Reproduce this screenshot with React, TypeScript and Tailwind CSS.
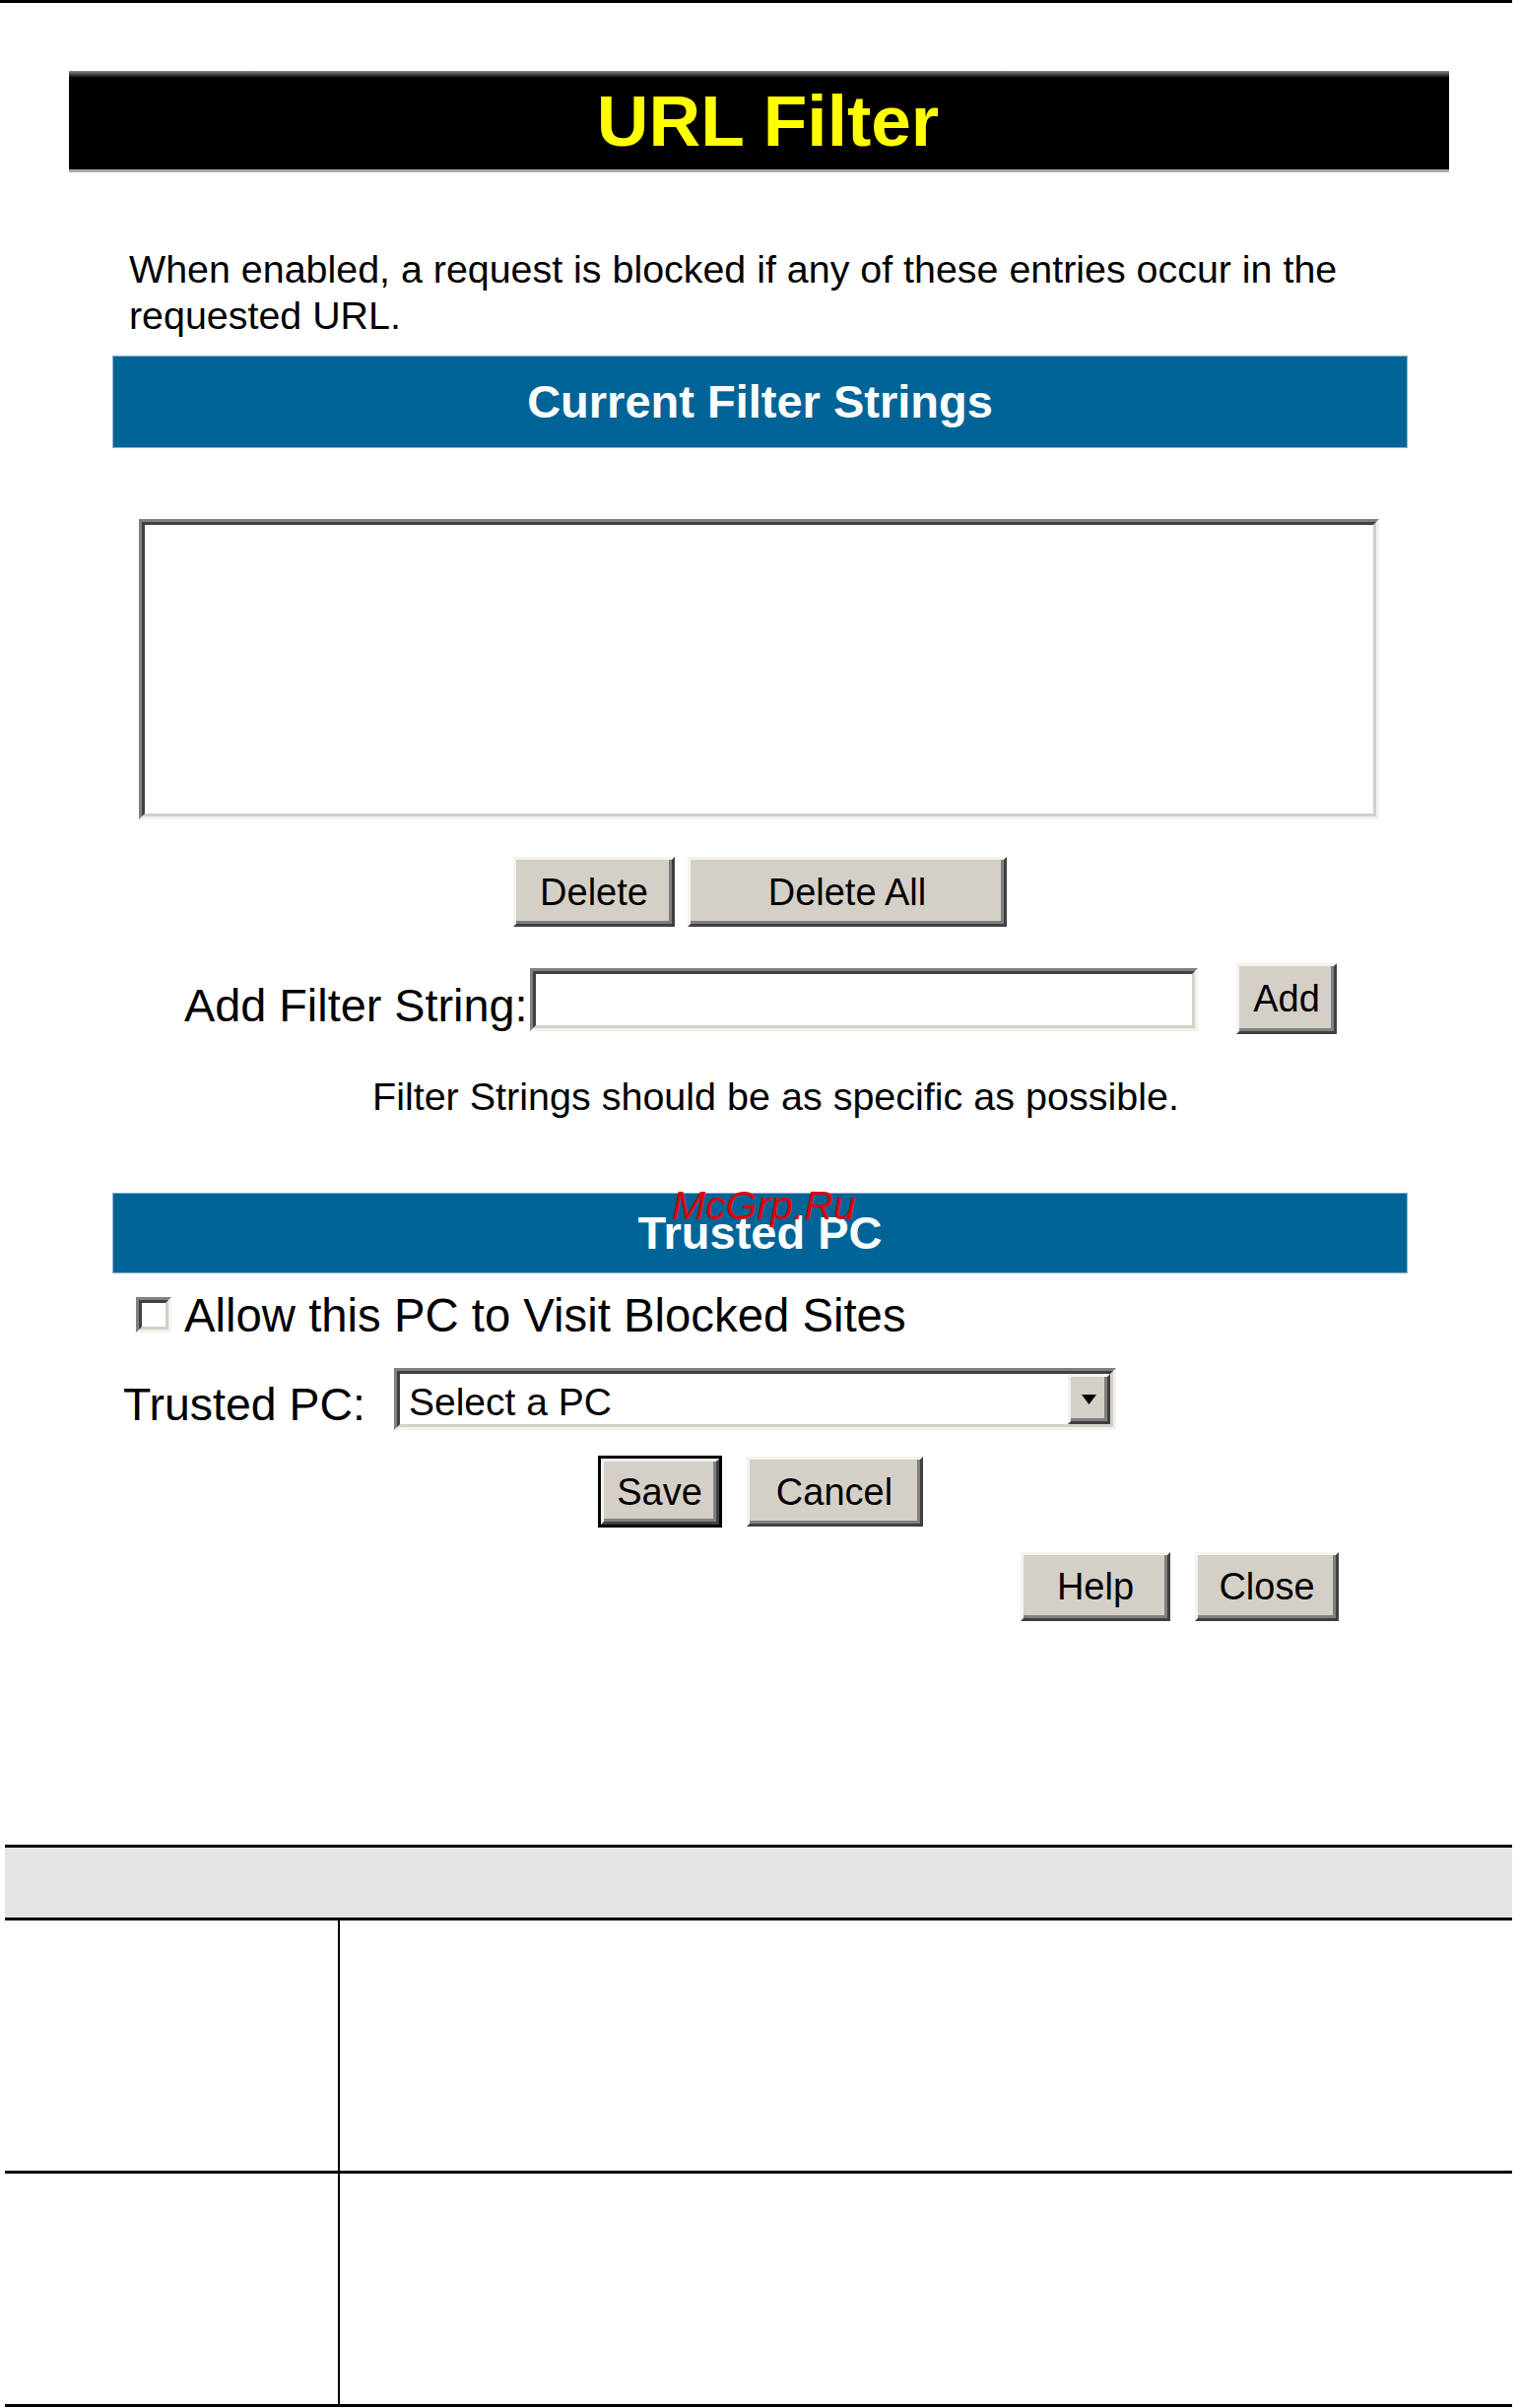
import type { ReactNode } from "react";

function Sunken({ className, children }: { className: string; children?: ReactNode }) {
    return (
        <div
            className={`border-[3px] border-t-[#808080] border-l-[#808080] border-b-[#f2f1ed] border-r-[#f2f1ed] ${className}`}
        >
            <div className="h-full w-full border-[3px] border-t-[#404040] border-l-[#404040] border-b-[#d4d0c8] border-r-[#d4d0c8] bg-white">
                {children}
            </div>
        </div>
    );
}

function Btn({ label, className }: { label: string; className: string }) {
    return (
        <button
            type="button"
            className={`flex items-center justify-center bg-[#d4d0c8] border-[3px] border-t-[#f4f3f0] border-l-[#f4f3f0] border-r-[#404040] border-b-[#404040] shadow-[inset_-3px_-3px_0_#808080] text-[38px] leading-none text-black ${className}`}
        >
            {label}
        </button>
    );
}

export default function App() {
    return (
        <div className="flex min-h-[2445px] w-[1543px] flex-col bg-white font-['Liberation_Sans',Arial,sans-serif] text-black">
            {/* page rule */}
            <div className="h-[3px] w-[1535px] bg-black" />

            {/* title banner */}
            <div className="ml-[70px] mt-[69px] flex h-[103px] w-[1401px] items-center justify-center border-b-[3px] border-[#a9a9a9] bg-[linear-gradient(to_bottom,#8a8a8a_0px,#000_7px)] pl-[18px]">
                <span className="text-[73px] font-bold leading-none text-[#ffff00]">URL Filter</span>
            </div>

            <p className="ml-[131px] mt-[75px] text-[39.4px] leading-[47px]">
                When enabled, a request is blocked if any of these entries occur in the
                <br />
                requested URL.
            </p>

            <div className="ml-[114px] flex w-[1315px] flex-col">
                {/* current filter strings */}
                <div className="mt-[17px] flex h-[94px] items-center justify-center border border-[#8db3cc] bg-[#006497]">
                    <span className="text-[47px] font-bold text-white">Current Filter Strings</span>
                </div>

                <Sunken className="ml-[27px] mt-[72px] h-[305px] w-[1259px]" />

                <div className="mt-[38px] flex h-[71px] justify-center gap-[13px]">
                    <Btn label="Delete" className="h-full w-[164px]" />
                    <Btn label="Delete All" className="h-full w-[324px]" />
                </div>

                <div className="mt-[37px] flex h-[72px] items-start">
                    <span className="ml-[73px] mt-[20px] w-[351px] text-[46.8px] leading-[46px]">Add Filter String:</span>
                    <Sunken className="mt-[5px] h-[64px] w-[678px]" />
                    <Btn label="Add" className="ml-[39px] h-[72px] w-[102px]" />
                </div>

                <p className="ml-[264px] mt-[40px] text-[39.5px] leading-[47px]">
                    Filter Strings should be as specific as possible.
                </p>

                {/* trusted pc */}
                <div className="relative mt-[74px] flex h-[82px] items-center justify-center border border-[#8db3cc] bg-[#006497]">
                    <span className="text-[47px] font-bold text-white">Trusted PC</span>
                    <span className="pointer-events-none absolute left-[567px] top-[-12px] text-[41px] italic leading-[48px] text-[#e00000]">
                        McGrp.Ru
                    </span>
                </div>

                <div className="mt-[19px] flex items-start">
                    <Sunken className="ml-[24px] mt-[5px] h-[36px] w-[36px]" />
                    <span className="ml-[13px] text-[47.3px] leading-[47px]">Allow this PC to Visit Blocked Sites</span>
                </div>

                <div className="mt-[30px] flex items-start">
                    <span className="ml-[11px] mt-[14px] w-[275px] text-[46.4px] leading-[46px]">Trusted PC:</span>
                    <Sunken className="h-[63px] w-[733px]">
                        <div className="flex h-full items-stretch">
                            <span className="flex flex-1 items-center pl-[9px] pt-[5px] text-[39px] leading-none">Select a PC</span>
                            <div className="flex w-[43px] items-center justify-center bg-[#d4d0c8] border-[3px] border-t-[#f4f3f0] border-l-[#f4f3f0] border-r-[#404040] border-b-[#404040] shadow-[inset_-3px_-3px_0_#808080]">
                                <svg width="15" height="10" viewBox="0 0 15 10">
                                    <polygon points="0,0 15,0 7.5,10" fill="#000" />
                                </svg>
                            </div>
                        </div>
                    </Sunken>
                </div>

                <div className="mt-[26px] flex h-[73px] items-center justify-center gap-[25px]">
                    <div className="h-[73px] w-[126px] border-[3px] border-black">
                        <Btn label="Save" className="h-full w-full" />
                    </div>
                    <Btn label="Cancel" className="h-[71px] w-[179px]" />
                </div>

                <div className="mt-[25px] flex h-[70px] justify-end gap-[25px] pr-[70px]">
                    <Btn label="Help" className="h-full w-[152px]" />
                    <Btn label="Close" className="h-full w-[146px]" />
                </div>
            </div>

            {/* description table */}
            <div className="ml-[5px] mt-[227px] flex w-[1530px] flex-col">
                <div className="h-[77px] border-y-[3px] border-black bg-[#e5e5e5]" />
                <div className="grid h-[254px] grid-cols-[340px_1fr]">
                    <div className="border-r-2 border-black" />
                    <div />
                </div>
                <div className="h-[3px] bg-black" />
                <div className="grid h-[234px] grid-cols-[340px_1fr]">
                    <div className="border-r-2 border-black" />
                    <div />
                </div>
                <div className="h-[3px] bg-black" />
            </div>
        </div>
    );
}
